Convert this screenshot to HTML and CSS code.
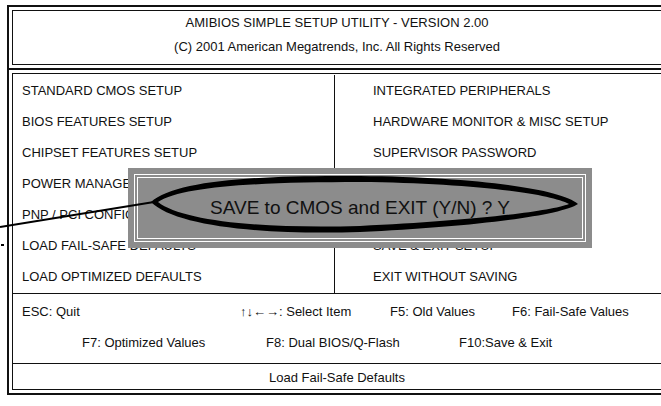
FILE: index.html
```html
<!DOCTYPE html>
<html lang="en">
<head>
    <meta charset="UTF-8">
    <meta name="viewport" content="width=device-width, initial-scale=1.0">
    <title>AMIBIOS Simple Setup Utility</title>
    <link rel="stylesheet" href="styles.css">
</head>
<body>
    <div class="screen">
        <div class="box head">
            <div class="box-in head-in">
                <div class="head-line">AMIBIOS SIMPLE SETUP UTILITY - VERSION 2.00</div>
                <div class="head-line">(C) 2001 American Megatrends, Inc. All Rights Reserved</div>
            </div>
        </div>

        <div class="box main">
            <div class="box-in">
                <div class="menu">
                    <ul class="col col-left">
                        <li>STANDARD CMOS SETUP</li>
                        <li>BIOS FEATURES SETUP</li>
                        <li>CHIPSET FEATURES SETUP</li>
                        <li>POWER MANAGEMENT SETUP</li>
                        <li>PNP / PCI CONFIGURATION</li>
                        <li>LOAD FAIL-SAFE DEFAULTS</li>
                        <li>LOAD OPTIMIZED DEFAULTS</li>
                    </ul>
                    <ul class="col col-right">
                        <li>INTEGRATED PERIPHERALS</li>
                        <li>HARDWARE MONITOR &amp; MISC SETUP</li>
                        <li>SUPERVISOR PASSWORD</li>
                        <li>USER PASSWORD</li>
                        <li>IDE HDD AUTO DETECTION</li>
                        <li>SAVE &amp; EXIT SETUP</li>
                        <li>EXIT WITHOUT SAVING</li>
                    </ul>

                    <!-- confirm dialog sits over the menu -->
                    <div class="dialog">
                        <div class="dialog-frame">
                            <div class="dialog-text">SAVE to CMOS and EXIT (Y/N) ? Y</div>
                        </div>
                    </div>
                </div>

                <div class="keys">
                    <div class="key-row row-1">
                        <span>ESC: Quit</span>
                        <span>&uarr;&darr;&larr;&rarr;: Select Item</span>
                        <span>F5: Old Values</span>
                        <span>F6: Fail-Safe Values</span>
                    </div>
                    <div class="key-row row-2">
                        <span>F7: Optimized Values</span>
                        <span>F8: Dual BIOS/Q-Flash</span>
                        <span>F10:Save &amp; Exit</span>
                    </div>
                </div>

                <div class="status">Load Fail-Safe Defaults</div>
            </div>
        </div>
    </div>

    <!-- hand drawn callout: ellipse round the prompt and its pointer line -->
    <svg class="callout" width="661" height="406" viewBox="0 0 661 406">
        <path fill="#000" fill-rule="evenodd"
              d="M151,202 C175,180 260,175 360,176 C470,177 560,188 578,204 C560,216 470,227 360,232 C260,235 175,226 151,202 Z
                 M158,202 C182,186 262,182 360,182 C466,183 548,193 569,204 C548,212 466,221 360,226 C262,229 182,221 158,202 Z"/>
        <line x1="154" y1="202" x2="0" y2="227" stroke="#000" stroke-width="2"/>
        <rect x="1" y="244" width="3" height="2" fill="#000"/>
    </svg>
</body>
</html>
```

FILE: styles.css
```css
body {
    margin: 0;
    background-color: #fff;
    color: #111;
    font-family: "Liberation Sans", Arial, sans-serif;
    font-size: 13px;
    overflow: hidden;
    position: relative;
    width: 661px;
    height: 406px;
}

.screen {
    margin: 5px 0 0 7px;
    width: 660px;
}

.box {
    border: 2px solid #111;
    padding: 3px;
}

.box-in {
    border: 1px solid #111;
}

.main {
    border-top: none;
}

.head-in {
    padding: 0 0 5px;
    text-align: center;
}

.head-line {
    line-height: 24px;
}

.menu {
    position: relative;
    display: grid;
    grid-template-columns: 322px 1fr;
    padding-top: 1px;
    border-bottom: 1px solid #111;
}

.col {
    list-style-type: none;
    margin: 0;
    padding: 0 0 1px;
}

.col li {
    height: 31px;
    line-height: 31px;
    white-space: nowrap;
}

.col-left {
    padding-left: 9px;
    border-right: 1px solid #111;
}

.col-right {
    padding-left: 38px;
}

.dialog {
    position: absolute;
    left: 115px;
    top: 94px;
    width: 464px;
    height: 80px;
    box-sizing: border-box;
    padding: 6px;
    background-color: #8c8c8c;
}

.dialog-frame {
    height: 100%;
    box-sizing: border-box;
    border: 1px solid #fff;
    padding: 2px;
}

.dialog-text {
    height: 100%;
    box-sizing: border-box;
    border: 1px solid #fff;
    display: flex;
    align-items: center;
    justify-content: center;
    font-size: 19px;
    color: #111;
}

.keys {
    padding: 2px 0 5px;
    border-bottom: 1px solid #111;
}

.key-row {
    display: grid;
    height: 31px;
    line-height: 31px;
    white-space: nowrap;
}

.row-1 {
    padding-left: 9px;
    grid-template-columns: 218px 150px 122px auto;
}

.row-2 {
    padding-left: 69px;
    grid-template-columns: 184px 193px auto;
}

.status {
    height: 25px;
    line-height: 27px;
    text-align: center;
}

.callout {
    position: absolute;
    left: 0;
    top: 0;
    pointer-events: none;
}
```
